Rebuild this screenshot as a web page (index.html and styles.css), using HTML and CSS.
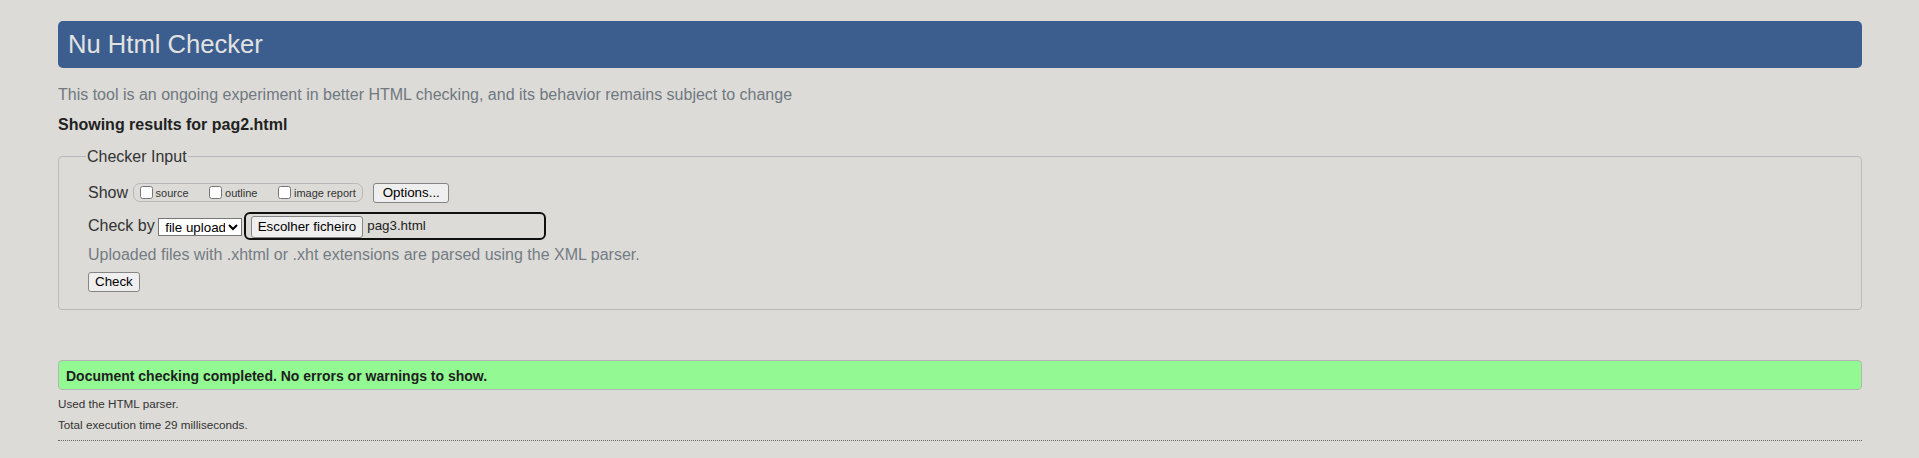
FILE: index.html
```html
<!DOCTYPE html>
<html lang="en">
<head>
<meta charset="utf-8">
<title>Showing results for pag2.html - Nu Html Checker</title>
<link rel="stylesheet" href="styles.css">
</head>
<body>
<h1 class="title">Nu Html Checker</h1>
<p class="intro">This tool is an ongoing experiment in better HTML checking, and its behavior remains subject to change</p>
<p class="results-for">Showing results for pag2.html</p>
<fieldset class="checker">
  <legend class="checker-legend">Checker Input</legend>
  <div class="row row-show">
    <span class="label">Show</span>
    <span class="show-box">
      <label class="opt"><input type="checkbox" class="cb"><span>source</span></label>
      <label class="opt"><input type="checkbox" class="cb"><span>outline</span></label>
      <label class="opt"><input type="checkbox" class="cb"><span>image report</span></label>
    </span>
    <button type="button" class="btn btn-options">Options...</button>
  </div>
  <div class="row row-check">
    <span class="label label-check">Check by</span>
    <select class="sel"><option>file upload</option><option>address</option><option>text input</option></select>
    <span class="file-wrap"><span class="btn btn-file">Escolher ficheiro</span><span class="file-name">pag3.html</span></span>
  </div>
  <p class="hint">Uploaded files with .xhtml or .xht extensions are parsed using the XML parser.</p>
  <div class="row row-submit">
    <button type="button" class="btn btn-check">Check</button>
  </div>
</fieldset>
<p class="success">Document checking completed. No errors or warnings to show.</p>
<p class="stats">Used the HTML parser.</p>
<p class="stats">Total execution time 29 milliseconds.</p>
<hr class="dotted">
</body>
</html>
```
FILE: styles.css
```css
html, body {
  margin: 0;
  padding: 0;
}
body {
  background: #dcdbd7;
  font-family: "Liberation Sans", Arial, sans-serif;
  font-size: 16px;
  line-height: 18px;
  color: #333;
  padding: 21px 57px 20px 58px;
}
.title {
  margin: 0;
  height: 47px;
  box-sizing: border-box;
  padding: 8px 10px 9px;
  font-size: 25.6px;
  line-height: 30px;
  font-weight: normal;
  color: #e2e2e2;
  background: #3b5e8e;
  border-radius: 5px;
}
.intro {
  margin: 18px 0 0;
  color: #707880;
}
.results-for {
  margin: 11.5px 0 0;
  font-weight: bold;
  color: #222;
}
.checker {
  margin: 14px 0 0;
  padding: 17px 20px 17px 29px;
  border: 1px solid #b9b9b9;
  border-radius: 4px;
  min-width: 0;
}
.checker-legend {
  padding: 0 1px;
  margin-left: -2px;
  line-height: 18px;
  color: #333;
}
.row {
  display: flex;
  align-items: center;
}
.row-show {
  height: 20px;
}
.row-check {
  height: 28px;
  margin-top: 9.7px;
}
.label {
  margin-right: 4.5px;
}
.label-check {
  margin-right: 3.5px;
}
.show-box {
  display: inline-flex;
  align-items: center;
  height: 19px;
  box-sizing: border-box;
  border: 1px solid #b9b9b9;
  border-radius: 7px;
  padding: 0 6px 0 6px;
  gap: 20.5px;
  font-size: 11px;
  color: #333;
}
.opt {
  display: inline-flex;
  align-items: center;
}
.cb {
  width: 13px;
  height: 13px;
  margin: -1px 3px 0 0;
}
.btn {
  font-family: "Liberation Sans", Arial, sans-serif;
  font-size: 13.333px;
  line-height: 16px;
  color: #000;
  background: #efefef;
  border: 1px solid #858585;
  border-radius: 3px;
  box-sizing: border-box;
}
.btn-options {
  margin-left: 10.5px;
  height: 20px;
  padding: 0 8.5px;
}
.sel {
  font-family: "Liberation Sans", Arial, sans-serif;
  font-size: 13.333px;
  width: 84px;
  height: 18px;
  box-sizing: border-box;
  background: #fff;
  color: #000;
  border: 1px solid #767676;
  border-radius: 0;
  padding: 0 0 0 2px;
  margin: 1px 0 0;
}
.file-wrap {
  display: inline-flex;
  align-items: center;
  width: 302px;
  height: 28px;
  box-sizing: border-box;
  margin-left: 1.5px;
  border: 2px solid #101010;
  border-radius: 6px;
  padding: 0 0 0 5px;
}
.btn-file {
  display: inline-flex;
  align-items: center;
  height: 22px;
  padding: 0 6px;
  margin-top: 1px;
}
.file-name {
  margin-left: 4px;
  font-size: 13.333px;
  color: #222;
}
.hint {
  margin: 5.5px 0 0;
  color: #747c84;
}
.row-submit {
  margin-top: 8px;
}
.btn-check {
  height: 20.5px;
  padding: 0 6px;
}
.success {
  margin: 50px 0 0;
  height: 30px;
  box-sizing: border-box;
  padding: 7px 7px 5px;
  border: 1px solid #b5b5b5;
  border-radius: 4px;
  background: #93fa93;
  font-size: 14px;
  line-height: 16px;
  font-weight: bold;
  color: #1e1e1e;
}
.stats {
  margin: 7px 0 0;
  font-size: 11.7px;
  line-height: 14px;
  color: #333;
}
.dotted {
  margin: 8px 0 0;
  height: 0;
  border: 0;
  border-top: 1px dotted #666;
}
```
